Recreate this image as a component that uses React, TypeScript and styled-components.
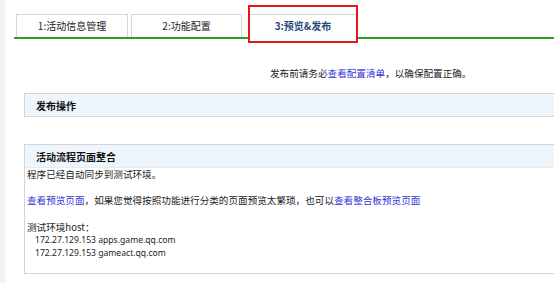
import React from "react";
import styled, { createGlobalStyle } from "styled-components";

const Global = createGlobalStyle`
  html, body { margin: 0; padding: 0; background: #fff; overflow: hidden; }
  body {
    font-family: "Noto Sans CJK SC", "Noto Sans", sans-serif;
    font-size: 9.6px;
    color: #222;
  }
`;

const Page = styled.div`
  position: relative;
  width: 100%;
  height: 283px;
  padding-top: 14px;
  box-sizing: border-box;
`;

const EdgeShade = styled.div`
  position: absolute;
  left: 0;
  top: 0;
  bottom: 0;
  width: 5px;
  background: repeating-linear-gradient(180deg, #ececec 0 1px, #fafafa 1px 2px);
`;

const TabBar = styled.div`
  display: flex;
  align-items: flex-end;
  margin-left: 14px;
  padding-left: 2px;
  height: 23px;
  border-bottom: 2px solid #2ea01c;
`;

const Tab = styled.div<{ $active?: boolean; $gap: number; $w: number }>`
  position: relative;
  box-sizing: border-box;
  width: ${(p) => p.$w}px;
  height: ${(p) => (p.$active ? 25 : 23)}px;
  margin-left: ${(p) => p.$gap}px;
  margin-bottom: ${(p) => (p.$active ? -2 : 0)}px;
  padding-bottom: ${(p) => (p.$active ? 2 : 0)}px;
  border: 1px solid #d6d6d6;
  border-bottom: none;
  background: #fff;
  display: flex;
  align-items: center;
  justify-content: center;
  font-size: 10px;
  line-height: 12px;
  color: ${(p) => (p.$active ? "#2a4a7a" : "#222")};
  font-weight: ${(p) => (p.$active ? 700 : 400)};
  ${(p) =>
    p.$active &&
    `
    &::after {
      content: "";
      position: absolute;
      left: -2px;
      right: -2px;
      top: -10px;
      bottom: -4px;
      border: 2px solid #e8141c;
    }
  `}
`;

const Notice = styled.div`
  margin-top: 27px;
  padding-left: 270px;
  line-height: 14px;
  white-space: nowrap;
`;

const Link = styled.a`
  color: #3434d6;
  text-decoration: none;
`;

const Panel = styled.div<{ $top: number }>`
  margin-top: ${(p) => p.$top}px;
  margin-left: 24px;
  border: 1px solid #d2d6da;
  border-right: none;
  overflow: hidden;
`;

const PanelHead = styled.div`
  height: 22px;
  background: #eef5fb;
  display: flex;
  align-items: center;
  padding-left: 11px;
  font-weight: 700;
  font-size: 10px;
  color: #111;
`;

const PanelBody = styled.div`
  padding: 0 0 13px 2px;
  line-height: 13.4px;
  border-top: 1px solid #e6ecf0;
`;

const Para = styled.p`
  margin: 0 0 13px;
  white-space: nowrap;
`;

const HostBlock = styled.div`
  white-space: nowrap;
`;

const HostLine = styled.div`
  padding-left: 8px;
  font-family: "Noto Sans", sans-serif;
  font-size: 8.6px;
  line-height: 13px;
  color: #222;
`;

export default function App() {
  return (
    <>
      <Global />
      <Page>
        <EdgeShade />
        <TabBar>
          <Tab $gap={0} $w={112}>1:活动信息管理</Tab>
          <Tab $gap={3} $w={111}>2:功能配置</Tab>
          <Tab $gap={7} $w={108} $active>3:预览&amp;发布</Tab>
        </TabBar>
        <Notice>
          发布前请务必<Link href="#">查看配置清单</Link>，以确保配置正确。
        </Notice>
        <Panel $top={13}>
          <PanelHead>发布操作</PanelHead>
        </Panel>
        <Panel $top={27}>
          <PanelHead>活动流程页面整合</PanelHead>
          <PanelBody>
            <Para>程序已经自动同步到测试环境。</Para>
            <Para>
              <Link href="#">查看预览页面</Link>，如果您觉得按照功能进行分类的页面预览太繁琐，也可以
              <Link href="#">查看整合板预览页面</Link>
            </Para>
            <HostBlock>
              测试环境host：
              <HostLine>172.27.129.153 apps.game.qq.com</HostLine>
              <HostLine>172.27.129.153 gameact.qq.com</HostLine>
            </HostBlock>
          </PanelBody>
        </Panel>
      </Page>
    </>
  );
}
